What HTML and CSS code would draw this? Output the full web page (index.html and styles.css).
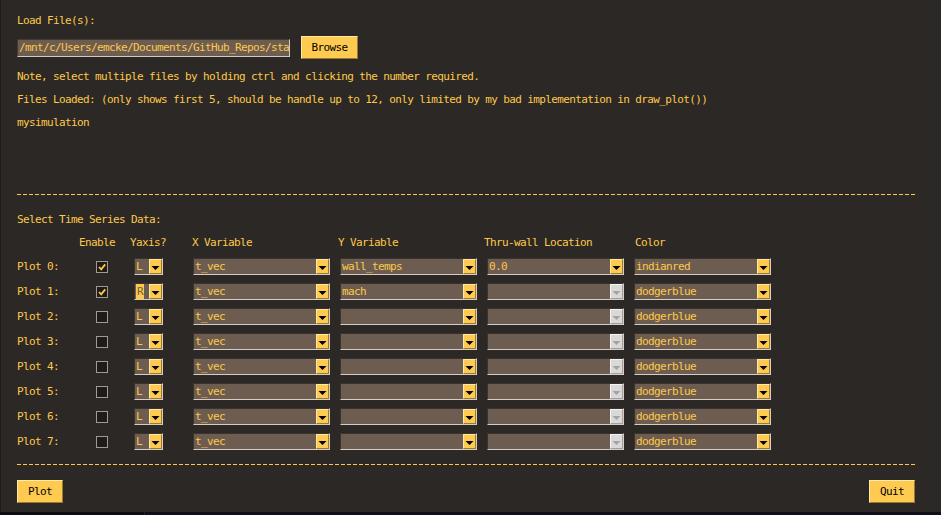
FILE: index.html
```html
<!DOCTYPE html>
<html>
<head>
<meta charset="utf-8">
<link rel="stylesheet" href="styles.css">
</head>
<body>
<div class="window">
  <div class="load-label">Load File(s):</div>
  <div class="file-row">
    <div class="entry">/mnt/c/Users/emcke/Documents/GitHub_Repos/sta</div>
    <div class="btn btn-browse">Browse</div>
  </div>
  <div class="info">
    <div class="line">Note, select multiple files by holding ctrl and clicking the number required.</div>
    <div class="line">Files Loaded: (only shows first 5, should be handle up to 12, only limited by my bad implementation in draw_plot())</div>
    <div class="line">mysimulation</div>
  </div>
  <div class="sep sep-top"></div>
  <div class="section-title">Select Time Series Data:</div>
  <div class="table">
    <div class="hd"></div>
    <div class="hd hd-enable">Enable</div>
    <div class="hd">Yaxis?</div>
    <div class="hd">X Variable</div>
    <div class="hd">Y Variable</div>
    <div class="hd">Thru-wall Location</div>
    <div class="hd hd-color">Color</div>

    <div class="lbl">Plot 0:</div>
    <div class="cell"><span class="check on"><svg viewBox="0 0 10 10" width="10" height="10"><path d="M2 5 L4.2 7.4 L8.2 2.4" fill="none" stroke="#ffc84a" stroke-width="1.8"/></svg></span></div>
    <div class="cell"><div class="combo yaxis"><span class="val">L</span><span class="arr"><svg viewBox="0 0 11 13" width="11" height="13"><polygon points="1.5,6 9.5,6 5.5,10" fill="#000"/></svg></span></div></div>
    <div class="cell"><div class="combo c-x"><span class="val">t_vec</span><span class="arr"><svg viewBox="0 0 11 13" width="11" height="13"><polygon points="1.5,6 9.5,6 5.5,10" fill="#000"/></svg></span></div></div>
    <div class="cell"><div class="combo c-y"><span class="val">wall_temps</span><span class="arr"><svg viewBox="0 0 11 13" width="11" height="13"><polygon points="1.5,6 9.5,6 5.5,10" fill="#000"/></svg></span></div></div>
    <div class="cell"><div class="combo c-t"><span class="val">0.0</span><span class="arr"><svg viewBox="0 0 11 13" width="11" height="13"><polygon points="1.5,6 9.5,6 5.5,10" fill="#000"/></svg></span></div></div>
    <div class="cell"><div class="combo c-c"><span class="val">indianred</span><span class="arr"><svg viewBox="0 0 11 13" width="11" height="13"><polygon points="1.5,6 9.5,6 5.5,10" fill="#000"/></svg></span></div></div>

    <div class="lbl">Plot 1:</div>
    <div class="cell"><span class="check on"><svg viewBox="0 0 10 10" width="10" height="10"><path d="M2 5 L4.2 7.4 L8.2 2.4" fill="none" stroke="#ffc84a" stroke-width="1.8"/></svg></span></div>
    <div class="cell"><div class="combo yaxis"><span class="val"><span class="sel">R</span></span><span class="arr"><svg viewBox="0 0 11 13" width="11" height="13"><polygon points="1.5,6 9.5,6 5.5,10" fill="#000"/></svg></span></div></div>
    <div class="cell"><div class="combo c-x"><span class="val">t_vec</span><span class="arr"><svg viewBox="0 0 11 13" width="11" height="13"><polygon points="1.5,6 9.5,6 5.5,10" fill="#000"/></svg></span></div></div>
    <div class="cell"><div class="combo c-y"><span class="val">mach</span><span class="arr"><svg viewBox="0 0 11 13" width="11" height="13"><polygon points="1.5,6 9.5,6 5.5,10" fill="#000"/></svg></span></div></div>
    <div class="cell"><div class="combo c-t"><span class="val"></span><span class="arr dis"><svg viewBox="0 0 11 13" width="11" height="13"><polygon points="1.5,6 9.5,6 5.5,10" fill="#a3a3a3"/></svg></span></div></div>
    <div class="cell"><div class="combo c-c"><span class="val">dodgerblue</span><span class="arr"><svg viewBox="0 0 11 13" width="11" height="13"><polygon points="1.5,6 9.5,6 5.5,10" fill="#000"/></svg></span></div></div>

    <div class="lbl">Plot 2:</div>
    <div class="cell"><span class="check"></span></div>
    <div class="cell"><div class="combo yaxis"><span class="val">L</span><span class="arr"><svg viewBox="0 0 11 13" width="11" height="13"><polygon points="1.5,6 9.5,6 5.5,10" fill="#000"/></svg></span></div></div>
    <div class="cell"><div class="combo c-x"><span class="val">t_vec</span><span class="arr"><svg viewBox="0 0 11 13" width="11" height="13"><polygon points="1.5,6 9.5,6 5.5,10" fill="#000"/></svg></span></div></div>
    <div class="cell"><div class="combo c-y"><span class="val"></span><span class="arr"><svg viewBox="0 0 11 13" width="11" height="13"><polygon points="1.5,6 9.5,6 5.5,10" fill="#000"/></svg></span></div></div>
    <div class="cell"><div class="combo c-t"><span class="val"></span><span class="arr dis"><svg viewBox="0 0 11 13" width="11" height="13"><polygon points="1.5,6 9.5,6 5.5,10" fill="#a3a3a3"/></svg></span></div></div>
    <div class="cell"><div class="combo c-c"><span class="val">dodgerblue</span><span class="arr"><svg viewBox="0 0 11 13" width="11" height="13"><polygon points="1.5,6 9.5,6 5.5,10" fill="#000"/></svg></span></div></div>

    <div class="lbl">Plot 3:</div>
    <div class="cell"><span class="check"></span></div>
    <div class="cell"><div class="combo yaxis"><span class="val">L</span><span class="arr"><svg viewBox="0 0 11 13" width="11" height="13"><polygon points="1.5,6 9.5,6 5.5,10" fill="#000"/></svg></span></div></div>
    <div class="cell"><div class="combo c-x"><span class="val">t_vec</span><span class="arr"><svg viewBox="0 0 11 13" width="11" height="13"><polygon points="1.5,6 9.5,6 5.5,10" fill="#000"/></svg></span></div></div>
    <div class="cell"><div class="combo c-y"><span class="val"></span><span class="arr"><svg viewBox="0 0 11 13" width="11" height="13"><polygon points="1.5,6 9.5,6 5.5,10" fill="#000"/></svg></span></div></div>
    <div class="cell"><div class="combo c-t"><span class="val"></span><span class="arr dis"><svg viewBox="0 0 11 13" width="11" height="13"><polygon points="1.5,6 9.5,6 5.5,10" fill="#a3a3a3"/></svg></span></div></div>
    <div class="cell"><div class="combo c-c"><span class="val">dodgerblue</span><span class="arr"><svg viewBox="0 0 11 13" width="11" height="13"><polygon points="1.5,6 9.5,6 5.5,10" fill="#000"/></svg></span></div></div>

    <div class="lbl">Plot 4:</div>
    <div class="cell"><span class="check"></span></div>
    <div class="cell"><div class="combo yaxis"><span class="val">L</span><span class="arr"><svg viewBox="0 0 11 13" width="11" height="13"><polygon points="1.5,6 9.5,6 5.5,10" fill="#000"/></svg></span></div></div>
    <div class="cell"><div class="combo c-x"><span class="val">t_vec</span><span class="arr"><svg viewBox="0 0 11 13" width="11" height="13"><polygon points="1.5,6 9.5,6 5.5,10" fill="#000"/></svg></span></div></div>
    <div class="cell"><div class="combo c-y"><span class="val"></span><span class="arr"><svg viewBox="0 0 11 13" width="11" height="13"><polygon points="1.5,6 9.5,6 5.5,10" fill="#000"/></svg></span></div></div>
    <div class="cell"><div class="combo c-t"><span class="val"></span><span class="arr dis"><svg viewBox="0 0 11 13" width="11" height="13"><polygon points="1.5,6 9.5,6 5.5,10" fill="#a3a3a3"/></svg></span></div></div>
    <div class="cell"><div class="combo c-c"><span class="val">dodgerblue</span><span class="arr"><svg viewBox="0 0 11 13" width="11" height="13"><polygon points="1.5,6 9.5,6 5.5,10" fill="#000"/></svg></span></div></div>

    <div class="lbl">Plot 5:</div>
    <div class="cell"><span class="check"></span></div>
    <div class="cell"><div class="combo yaxis"><span class="val">L</span><span class="arr"><svg viewBox="0 0 11 13" width="11" height="13"><polygon points="1.5,6 9.5,6 5.5,10" fill="#000"/></svg></span></div></div>
    <div class="cell"><div class="combo c-x"><span class="val">t_vec</span><span class="arr"><svg viewBox="0 0 11 13" width="11" height="13"><polygon points="1.5,6 9.5,6 5.5,10" fill="#000"/></svg></span></div></div>
    <div class="cell"><div class="combo c-y"><span class="val"></span><span class="arr"><svg viewBox="0 0 11 13" width="11" height="13"><polygon points="1.5,6 9.5,6 5.5,10" fill="#000"/></svg></span></div></div>
    <div class="cell"><div class="combo c-t"><span class="val"></span><span class="arr dis"><svg viewBox="0 0 11 13" width="11" height="13"><polygon points="1.5,6 9.5,6 5.5,10" fill="#a3a3a3"/></svg></span></div></div>
    <div class="cell"><div class="combo c-c"><span class="val">dodgerblue</span><span class="arr"><svg viewBox="0 0 11 13" width="11" height="13"><polygon points="1.5,6 9.5,6 5.5,10" fill="#000"/></svg></span></div></div>

    <div class="lbl">Plot 6:</div>
    <div class="cell"><span class="check"></span></div>
    <div class="cell"><div class="combo yaxis"><span class="val">L</span><span class="arr"><svg viewBox="0 0 11 13" width="11" height="13"><polygon points="1.5,6 9.5,6 5.5,10" fill="#000"/></svg></span></div></div>
    <div class="cell"><div class="combo c-x"><span class="val">t_vec</span><span class="arr"><svg viewBox="0 0 11 13" width="11" height="13"><polygon points="1.5,6 9.5,6 5.5,10" fill="#000"/></svg></span></div></div>
    <div class="cell"><div class="combo c-y"><span class="val"></span><span class="arr"><svg viewBox="0 0 11 13" width="11" height="13"><polygon points="1.5,6 9.5,6 5.5,10" fill="#000"/></svg></span></div></div>
    <div class="cell"><div class="combo c-t"><span class="val"></span><span class="arr dis"><svg viewBox="0 0 11 13" width="11" height="13"><polygon points="1.5,6 9.5,6 5.5,10" fill="#a3a3a3"/></svg></span></div></div>
    <div class="cell"><div class="combo c-c"><span class="val">dodgerblue</span><span class="arr"><svg viewBox="0 0 11 13" width="11" height="13"><polygon points="1.5,6 9.5,6 5.5,10" fill="#000"/></svg></span></div></div>

    <div class="lbl">Plot 7:</div>
    <div class="cell"><span class="check"></span></div>
    <div class="cell"><div class="combo yaxis"><span class="val">L</span><span class="arr"><svg viewBox="0 0 11 13" width="11" height="13"><polygon points="1.5,6 9.5,6 5.5,10" fill="#000"/></svg></span></div></div>
    <div class="cell"><div class="combo c-x"><span class="val">t_vec</span><span class="arr"><svg viewBox="0 0 11 13" width="11" height="13"><polygon points="1.5,6 9.5,6 5.5,10" fill="#000"/></svg></span></div></div>
    <div class="cell"><div class="combo c-y"><span class="val"></span><span class="arr"><svg viewBox="0 0 11 13" width="11" height="13"><polygon points="1.5,6 9.5,6 5.5,10" fill="#000"/></svg></span></div></div>
    <div class="cell"><div class="combo c-t"><span class="val"></span><span class="arr dis"><svg viewBox="0 0 11 13" width="11" height="13"><polygon points="1.5,6 9.5,6 5.5,10" fill="#a3a3a3"/></svg></span></div></div>
    <div class="cell"><div class="combo c-c"><span class="val">dodgerblue</span><span class="arr"><svg viewBox="0 0 11 13" width="11" height="13"><polygon points="1.5,6 9.5,6 5.5,10" fill="#000"/></svg></span></div></div>
  </div>
  <div class="sep sep-bottom"></div>
  <div class="actions">
    <div class="btn btn-action">Plot</div>
    <div class="btn btn-action">Quit</div>
  </div>
</div>
<div class="under">
  <div class="under-side"></div>
  <div class="under-main"></div>
</div>
</body>
</html>
```
FILE: styles.css
```css
html, body {
  margin: 0;
  padding: 0;
  background: #0d1117;
}
body {
  width: 941px;
  height: 515px;
  overflow: hidden;
  font-family: "DejaVu Sans Mono", "Liberation Mono", monospace;
  font-size: 11px;
  letter-spacing: -0.62px;
  color: #ffc84a;
}
.window {
  box-sizing: border-box;
  height: 512px;
  background: #2c2825;
  border-left: 1px solid #1e1b19;
  padding-left: 16px;
  overflow: hidden;
}
.load-label {
  margin-top: 13px;
  line-height: 16px;
  white-space: nowrap;
}
.file-row {
  margin-top: 7px;
  height: 23px;
  display: flex;
  align-items: center;
}
.entry {
  box-sizing: border-box;
  width: 273px;
  height: 18px;
  background: #6d5d50;
  border: 1px solid;
  border-color: #453b34 #d3cbc3 #d3cbc3 #453b34;
  line-height: 16px;
  padding-left: 1px;
  white-space: nowrap;
  overflow: hidden;
}
.btn {
  box-sizing: border-box;
  background: #ffca50;
  color: #000;
  border: 1px solid;
  border-color: #ffe7a6 #9a7a30 #9a7a30 #ffe7a6;
  text-align: center;
  line-height: 21px;
  height: 23px;
  white-space: nowrap;
}
.btn-browse {
  width: 57px;
  margin-left: 11px;
}
.info {
  margin-top: 6px;
}
.line {
  line-height: 23px;
  white-space: nowrap;
}
.sep {
  width: 900px;
  height: 1px;
  background: repeating-linear-gradient(to right, #ffc84a 0 4px, transparent 4px 6px);
}
.sep-top {
  margin-top: 60px;
}
.section-title {
  margin-top: 17px;
  line-height: 16px;
  white-space: nowrap;
}
.table {
  margin-top: 7px;
  display: grid;
  grid-template-columns: 62px 51px 62px 146px 146px 150px 137px;
  grid-template-rows: 19px repeat(8, 25px);
  align-items: center;
}
.hd {
  align-self: start;
  line-height: 16px;
  white-space: nowrap;
}
.hd-color {
  margin-left: 1px;
}
.lbl {
  white-space: nowrap;
  line-height: 16px;
}
.cell {
  display: flex;
  align-items: center;
}
.check {
  box-sizing: border-box;
  width: 12px;
  height: 12px;
  margin-left: 17px;
  border: 1px solid #a39a92;
  background: #1f1b18;
  display: flex;
}
.combo {
  box-sizing: border-box;
  width: 137px;
  height: 17px;
  display: flex;
  background: #6d5d50;
  border: 1px solid;
  border-color: #3b332e #d6cec6 #d6cec6 #3b332e;
}
.yaxis {
  width: 29px;
  margin-left: 4px;
}
.c-x { margin-left: 1px; }
.c-y { margin-left: 2px; }
.c-t { margin-left: 3px; }
.val {
  flex: 1;
  line-height: 15px;
  padding-left: 1px;
  white-space: nowrap;
  overflow: hidden;
}
.sel {
  background: #ffc84a;
  color: #6d5d50;
  display: inline-block;
  padding: 0 1px;
}
.arr {
  box-sizing: border-box;
  width: 13px;
  height: 15px;
  background: #ffca50;
  border: 1px solid;
  border-color: #ffe7a6 #9a7a30 #9a7a30 #ffe7a6;
  display: flex;
}
.arr.dis {
  background: #d9d9d9;
  border-color: #f4f4f4 #a0a0a0 #a0a0a0 #f4f4f4;
}
.sep-bottom {
  margin-top: 10px;
}
.actions {
  margin-top: 15px;
  width: 898px;
  display: flex;
  justify-content: space-between;
}
.btn-action {
  width: 46px;
}
.under {
  height: 3px;
  display: flex;
  overflow: hidden;
}
.under-side {
  width: 144px;
  background: #0a0d12;
  border-right: 1px solid #1c222b;
}
.under-main {
  flex: 1;
  background: #0d1117;
}
```
